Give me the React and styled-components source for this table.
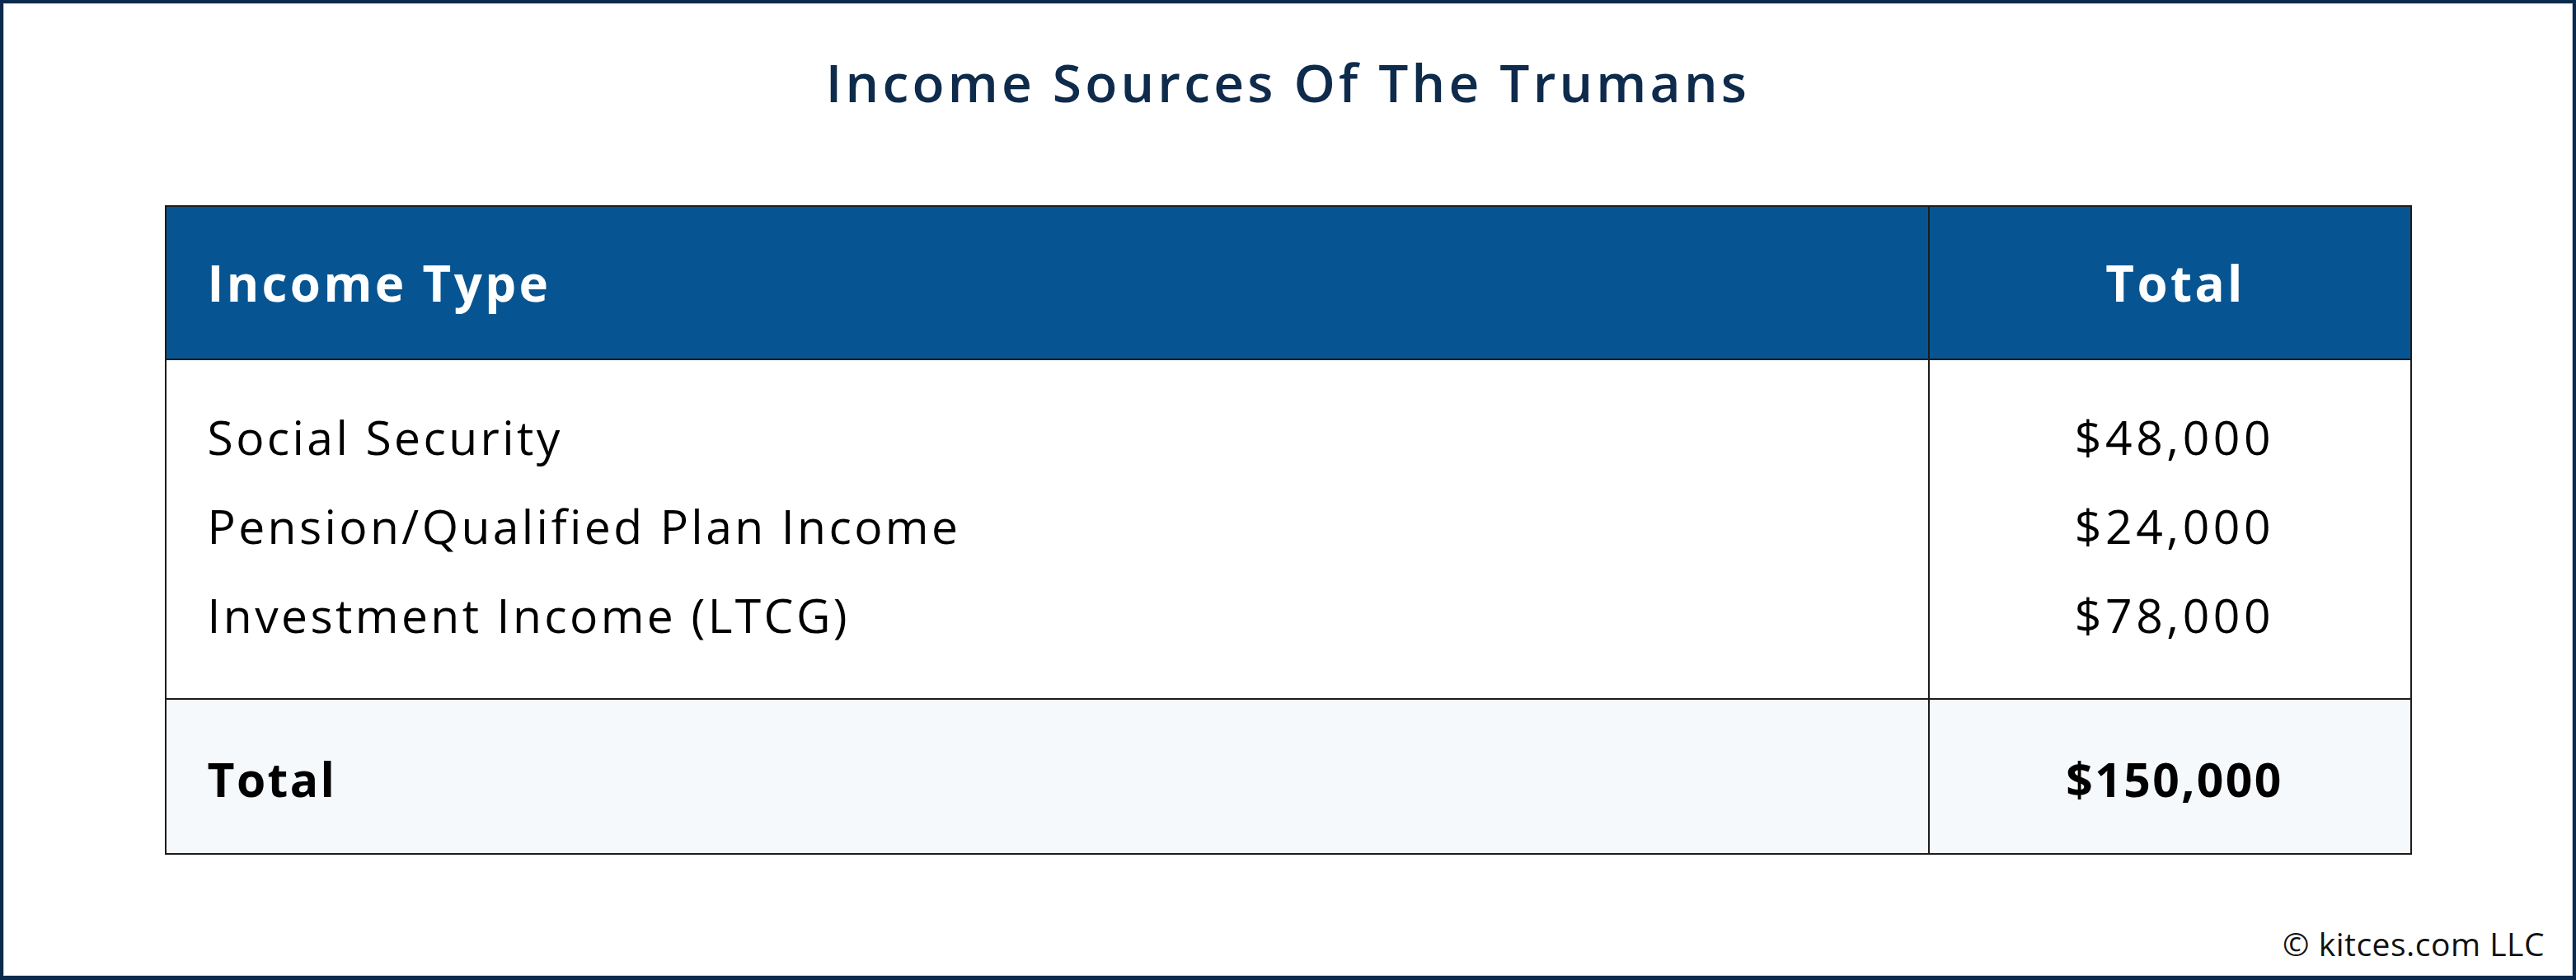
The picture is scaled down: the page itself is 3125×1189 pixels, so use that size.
import React from "react";
import styled, { createGlobalStyle } from "styled-components";

const GlobalStyle = createGlobalStyle`
  html, body {
    margin: 0;
    padding: 0;
    background: #ffffff;
  }
`;

const rows = [
  { label: "Social Security", value: "$48,000" },
  { label: "Pension/Qualified Plan Income", value: "$24,000" },
  { label: "Investment Income (LTCG)", value: "$78,000" },
];

const App = () => {
  return (
    <Frame>
      <GlobalStyle />
      <Title>Income Sources Of The Trumans</Title>
      <Table>
        <HeaderRow>
          <HeadCell>Income Type</HeadCell>
          <HeadCell center>Total</HeadCell>
        </HeaderRow>
        <BodyRow>
          <Cell>
            {rows.map((r) => (
              <Line key={r.label}>{r.label}</Line>
            ))}
          </Cell>
          <Cell center>
            {rows.map((r) => (
              <Line key={r.label} wide>
                {r.value}
              </Line>
            ))}
          </Cell>
        </BodyRow>
        <TotalRow>
          <Cell strong>Total</Cell>
          <Cell center strong>
            $150,000
          </Cell>
        </TotalRow>
      </Table>
      <Footer>© kitces.com LLC</Footer>
    </Frame>
  );
};

const Frame = styled.div`
  box-sizing: border-box;
  width: 3125px;
  height: 1189px;
  border: 4px solid #0c2a4d;
  border-bottom-width: 5px;
  box-shadow: inset 0 0 0 1px #c9d4df;
  display: flex;
  flex-direction: column;
  font-family: "Open Sans", "Liberation Sans", sans-serif;
  color: #000;
`;

const Title = styled.h1`
  margin: 58px 0 0;
  height: 76px;
  line-height: 76px;
  text-align: center;
  font-size: 64px;
  font-weight: 600;
  letter-spacing: 4.2px;
  color: #0e2b4c;
`;

const Table = styled.div`
  box-sizing: border-box;
  width: 2726px;
  margin: 111px auto 0;
  border: 2px solid #1c1c1c;
`;

const Row = styled.div`
  display: grid;
  grid-template-columns: 2137px 1fr;
`;

const HeaderRow = styled(Row)`
  height: 184px;
  background: #065592;
  color: #ffffff;
`;

const BodyRow = styled(Row)`
  border-top: 2px solid #1c1c1c;
`;

const TotalRow = styled(Row)`
  height: 186px;
  border-top: 2px solid #1c1c1c;
  background: #f5f9fc;
`;

const HeadCell = styled.div`
  display: flex;
  align-items: center;
  justify-content: ${(p) => (p.center ? "center" : "flex-start")};
  padding-left: ${(p) => (p.center ? "14px" : "50px")};
  font-size: 60px;
  font-weight: 700;
  letter-spacing: 3.4px;
  & + & {
    border-left: 2px solid #1c1c1c;
  }
`;

const Cell = styled.div`
  display: flex;
  flex-direction: column;
  justify-content: center;
  align-items: ${(p) => (p.center ? "center" : "flex-start")};
  padding: ${(p) => (p.strong ? "6px 0 0" : "39px 0 47px")};
  padding-left: ${(p) => (p.center ? "12px" : "50px")};
  font-size: 57px;
  font-weight: ${(p) => (p.strong ? 700 : 400)};
  letter-spacing: ${(p) => (p.strong ? "2.4px" : "3.4px")};
  & + & {
    border-left: 2px solid #1c1c1c;
  }
`;

const Line = styled.div`
  height: 108px;
  line-height: 108px;
  white-space: nowrap;
  letter-spacing: ${(p) => (p.wide ? "4.6px" : "inherit")};
`;

const Footer = styled.div`
  margin-top: auto;
  padding: 0 34px 14px 0;
  text-align: right;
  font-size: 39px;
  line-height: 50px;
  letter-spacing: 0.5px;
  color: #111;
`;

export default App;
